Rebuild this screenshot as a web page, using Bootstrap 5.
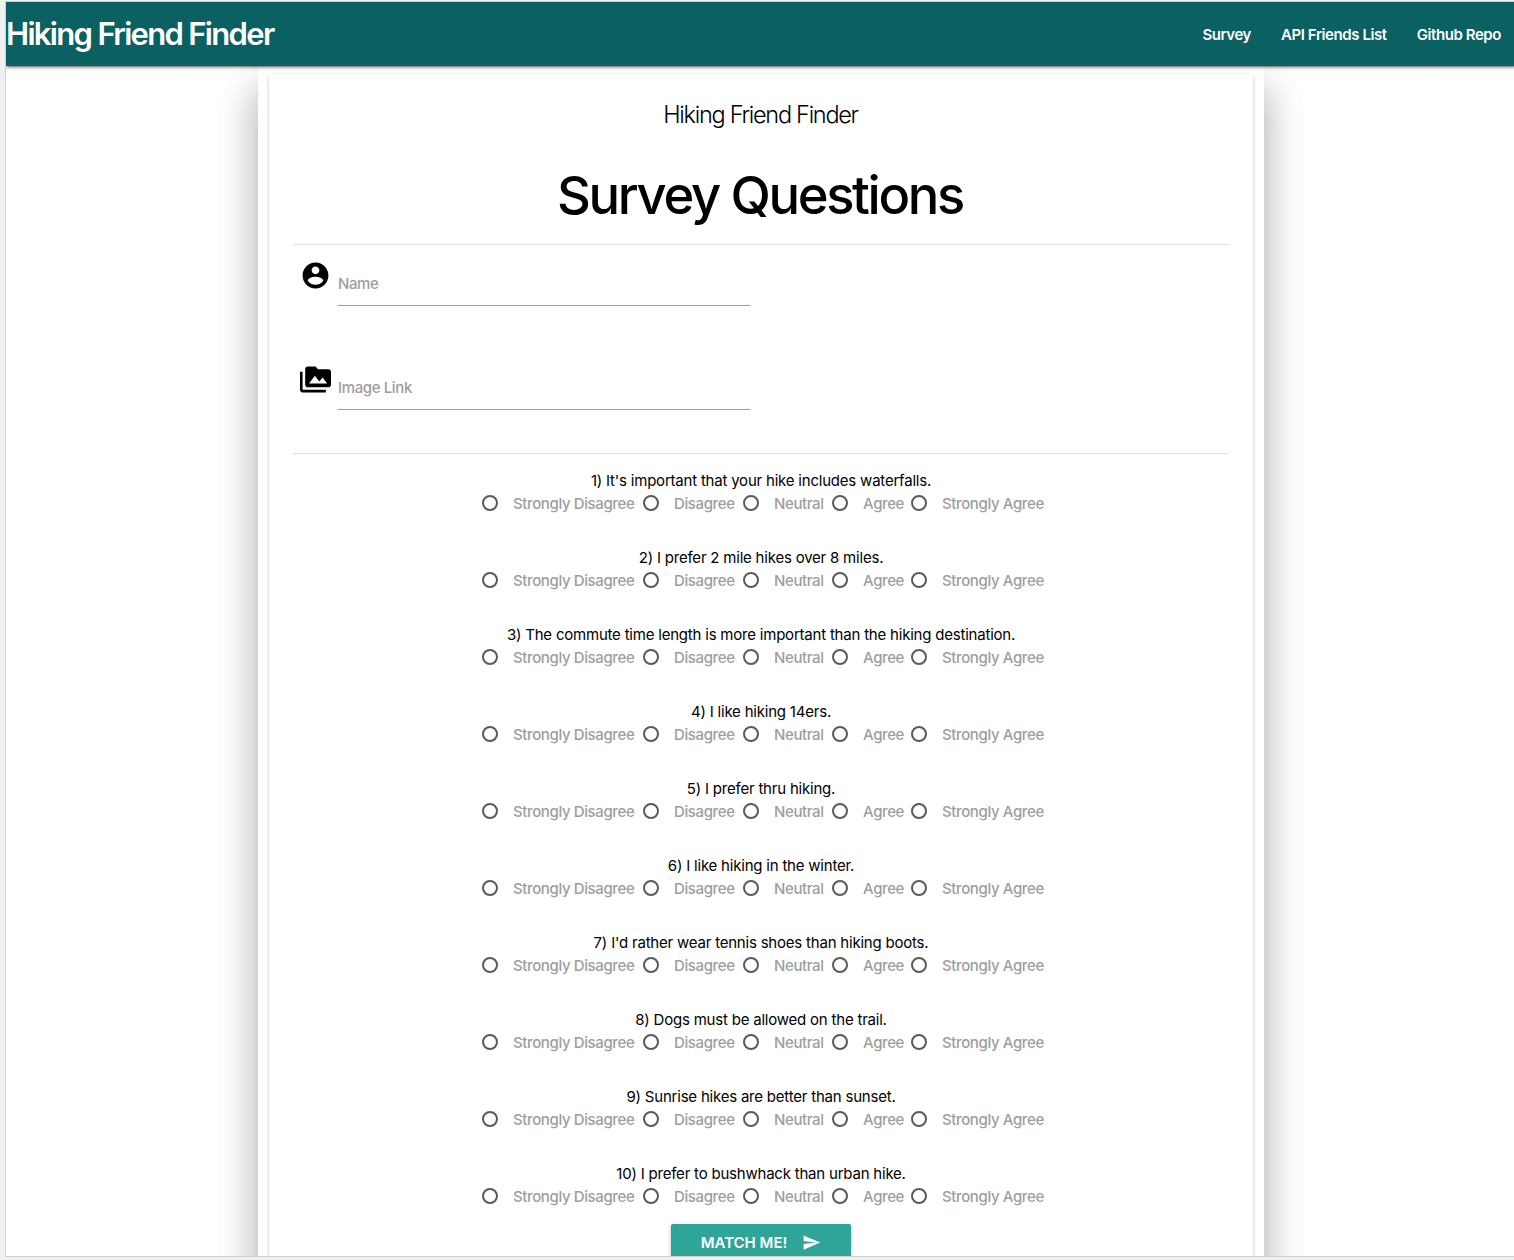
<!DOCTYPE html>
<html lang="en">
<head>
<meta charset="utf-8">
<meta name="viewport" content="width=device-width, initial-scale=1">
<title>Hiking Friend Finder</title>
<link href="https://cdn.jsdelivr.net/npm/bootstrap@5.3.0/dist/css/bootstrap.min.css" rel="stylesheet">
<style>
  body { font-family: Inter, "Liberation Sans", sans-serif; font-size: 15px; line-height: 1.5; color: #000; background: #f1f1f1; height: 1260px; overflow: hidden; padding: 1px 0 0 5px; }
  .window-frame { width: 1512px; height: 1256px; border: 1px solid #d0d0d0; background: #fff; overflow: hidden; }
  .topbar { height: 64px; background: #0b6062; z-index: 2; box-shadow: 0 2px 2px 0 rgba(0,0,0,.2), 0 3px 1px -2px rgba(0,0,0,.18), 0 1px 5px 0 rgba(0,0,0,.24); }
  .brand-title { font-size: 31px; font-weight: 600; letter-spacing: -1.68px; line-height: 64px; }
  .topbar .nav-link { font-size: 15px; font-weight: 600; letter-spacing: -.42px; padding: 0 15px; line-height: 66px; color: #fff; }
  .sheet { width: 1006px; padding: 8px 11px 0; height: 1400px; background: #fff; box-shadow: 0 27px 36px 2px rgba(0,0,0,.2), 0 22px 38px 3px rgba(0,0,0,.13); }
  .survey-card { height: 1300px; padding: 24px; border-radius: 2px; background: #fff; box-shadow: 0 2px 2px 0 rgba(0,0,0,.12), 0 1px 4px 0 rgba(0,0,0,.18); }
  .card-caption { font-size: 23.5px; font-weight: 300; line-height: 34px; letter-spacing: -1.28px; height: 32px; padding-right: 1px; }
  .main-title { font-size: 52.5px; font-weight: 500; line-height: 60px; letter-spacing: -2.35px; margin: 35px 0 19px; padding-right: 2px; }
  .rule { height: 1px; background: #e0e0e0; }
  .field-line { height: 104px; padding-left: 7px; width: 457px; }
  .field-line svg { width: 31px; height: 31px; margin-top: 15px; flex: none; }
  .field-line input { width: 412px; height: 45px; margin: 16px 0 0 7px; padding: 1px 0 0; border: 0; border-bottom: 1px solid #9e9e9e; border-radius: 0; background: transparent; font-size: 15px; letter-spacing: -.38px; outline: 0; }
  .field-line input::placeholder { color: #9e9e9e; opacity: 1; font-weight: 500; }
  .question { height: 77px; }
  .question:last-child { height: 61px; }
  .q-text { line-height: 21px; height: 22px; letter-spacing: -.21px; }
  .choices { gap: 7px; margin-left: 2px; }
  .choice { height: 24px; line-height: 24px; color: #9e9e9e; font-weight: 500; letter-spacing: -.38px; white-space: nowrap; }
  .choice input { appearance: none; width: 16px; height: 16px; border: 2px solid #5a5a5a; border-radius: 50%; margin: 0 15px 2px 0; flex: none; }
  .choice.w1 { width: 154px; } .choice.w2 { width: 93px; } .choice.w3 { width: 82px; } .choice.w4 { width: 72px; } .choice.w5 { width: 131px; }
  .match-btn { width: 180px; height: 36px; padding: 0; border: 0; border-radius: 2px; background: #2ea598; color: #fff; font-size: 15px; font-weight: 600; box-shadow: 0 2px 2px 0 rgba(0,0,0,.14), 0 1px 5px 0 rgba(0,0,0,.2); }
  .match-btn span { padding-top: 2px; }
  .match-btn svg { width: 19px; height: 19px; margin-left: 15px; }
</style>
</head>
<body>
<div class="window-frame">
  <nav class="topbar position-relative d-flex justify-content-between text-white">
    <a href="#" class="brand-title text-white text-decoration-none">Hiking Friend Finder</a>
    <div class="nav flex-nowrap">
      <a class="nav-link" href="#">Survey</a>
      <a class="nav-link" href="#">API Friends List</a>
      <a class="nav-link" href="#">Github Repo</a>
    </div>
  </nav>
  <main class="sheet mx-auto">
    <div class="survey-card">
      <div class="card-caption text-center">Hiking Friend Finder</div>
      <h1 class="main-title text-center">Survey Questions</h1>
      <div class="rule"></div>
      <div class="field-line d-flex">
        <svg viewBox="0 0 24 24"><path d="M12 2C6.48 2 2 6.48 2 12s4.480 10 10 10 10-4.480 10-10S17.520 2 12 2zm0 3c1.660 0 3 1.340 3 3s-1.340 3-3 3-3-1.340-3-3 1.340-3 3-3zm0 14.200c-2.500 0-4.710-1.280-6-3.220.030-1.990 4-3.080 6-3.080 1.990 0 5.970 1.090 6 3.080-1.290 1.940-3.500 3.220-6 3.220z"/></svg>
        <input type="text" placeholder="Name" aria-label="Name">
      </div>
      <div class="field-line d-flex">
        <svg viewBox="0 0 24 24"><path d="M2 6H0v5h.010L0 20c0 1.100.900 2 2 2h18v-2H2V6zm20-2h-8l-2-2H6c-1.100 0-1.990.900-1.990 2L4 16c0 1.100.900 2 2 2h16c1.100 0 2-.900 2-2V6c0-1.100-.900-2-2-2zM7 15l4.500-6 3.500 4.510 2.500-3.010L21 15H7z"/></svg>
        <input type="text" placeholder="Image Link" aria-label="Image Link">
      </div>
      <div class="rule"></div>
      <form id="questions" class="pt-3"></form>
      <div class="text-center">
        <button type="button" class="btn match-btn d-inline-flex align-items-center justify-content-center"><span>MATCH ME!</span>
          <svg viewBox="0 0 24 24" fill="#fff"><path d="M2.010 21L23 12 2.010 3 2 10l15 2-15 2z"/></svg>
        </button>
      </div>
    </div>
  </main>
</div>
<script>
  const questions = [
    "It's important that your hike includes waterfalls.",
    "I prefer 2 mile hikes over 8 miles.",
    "The commute time length is more important than the hiking destination.",
    "I like hiking 14ers.",
    "I prefer thru hiking.",
    "I like hiking in the winter.",
    "I'd rather wear tennis shoes than hiking boots.",
    "Dogs must be allowed on the trail.",
    "Sunrise hikes are better than sunset.",
    "I prefer to bushwhack than urban hike."
  ];
  const choices = ["Strongly Disagree", "Disagree", "Neutral", "Agree", "Strongly Agree"];
  document.getElementById("questions").innerHTML = questions.map((q, i) =>
    `<div class="question"><div class="q-text text-center">${i + 1}) ${q}</div><div class="choices d-flex justify-content-center">` +
    choices.map((c, k) => `<label class="choice w${k + 1} d-flex align-items-center"><input type="radio" name="q${i + 1}" value="${k + 1}"><span>${c}</span></label>`).join("") +
    `</div></div>`).join("");
</script>
<script src="https://cdn.jsdelivr.net/npm/bootstrap@5.3.0/dist/js/bootstrap.bundle.min.js"></script>
</body>
</html>
